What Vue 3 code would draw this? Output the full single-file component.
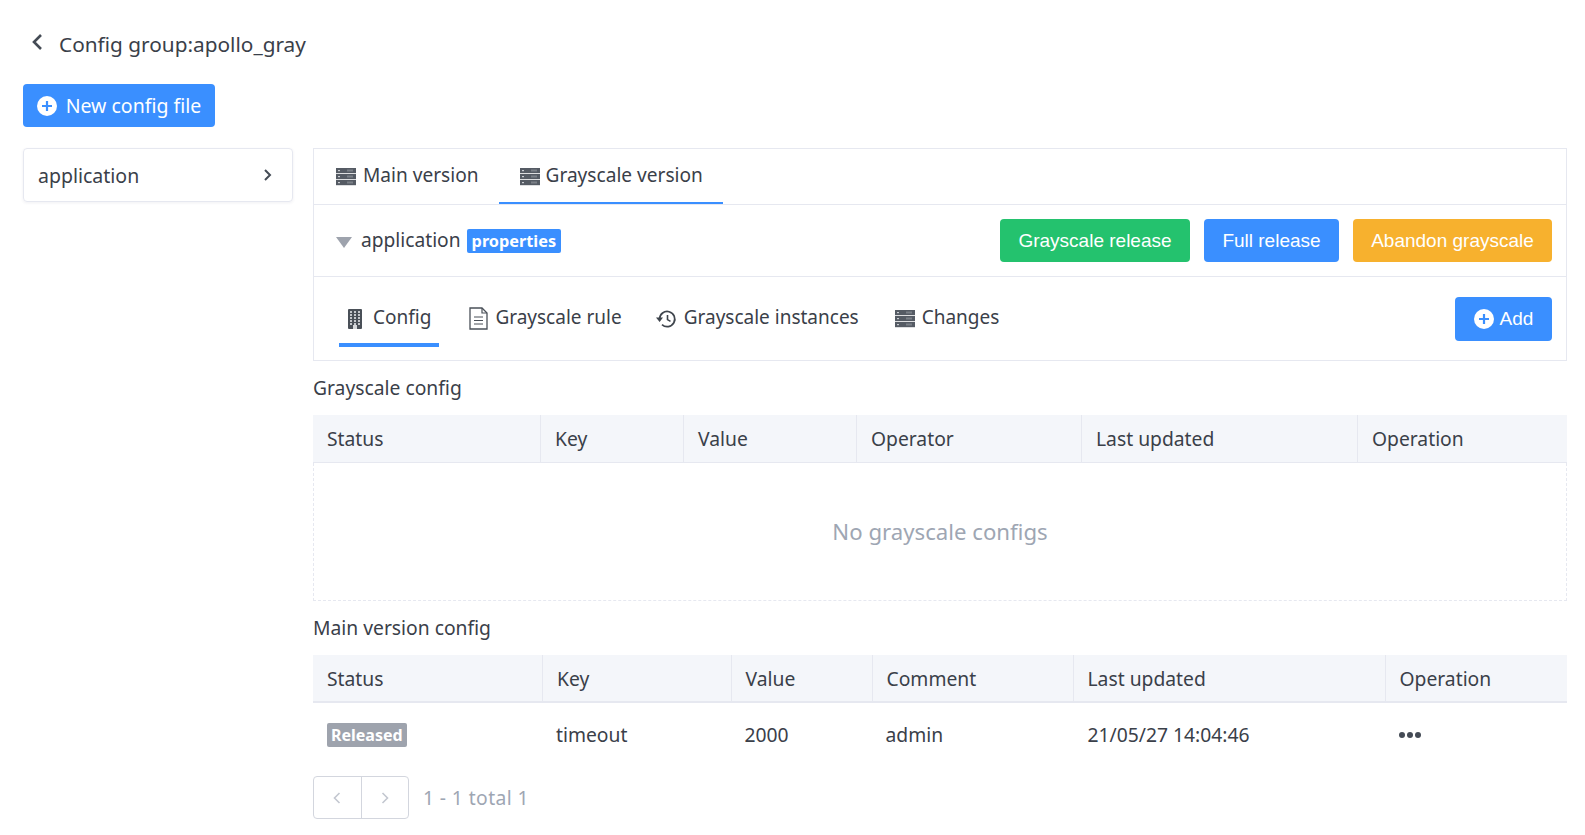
<template>
  <div class="page">
    <div class="title-row">
      <svg class="back" viewBox="0 0 12 18" width="12" height="18"><path d="M10 2 3 9l7 7" fill="none" stroke="#444b55" stroke-width="2.6"/></svg>
      <span>Config group:apollo_gray</span>
    </div>

    <button class="btn btn-new">
      <svg viewBox="0 0 20 20" width="20" height="20"><circle cx="10" cy="10" r="10" fill="#fff"/><path d="M10 5v10M5 10h10" stroke="#3a8fff" stroke-width="2.2"/></svg>
      New config file
    </button>

    <div class="body">
      <div class="file-card">
        <span>application</span>
        <svg viewBox="0 0 10 14" width="10" height="14"><path d="M2 2l5 5-5 5" fill="none" stroke="#444b55" stroke-width="2"/></svg>
      </div>

      <div class="main">
        <div class="panel">
          <div class="tabs-top">
            <div v-for="t in topTabs" :key="t.name" :class="['top-tab', { active: t.active }]">
              <svg class="ico" viewBox="0 0 20 18" width="20" height="18">
                <g v-for="y in [0, 6, 12]" :key="y">
                  <rect x="0" :y="y" width="20" height="5.2" fill="#555b64"/>
                  <rect x="2" :y="y + 2" width="2" height="1.2" fill="#c9ccd1"/>
                  <rect x="11" :y="y + 1.5" width="6" height="2" fill="#7b8087"/>
                </g>
              </svg>
              {{ t.name }}
            </div>
          </div>

          <div class="file-row">
            <div class="file-name">
              <span class="caret"></span>
              <span class="file-label">application</span>
              <span class="tag-blue">properties</span>
            </div>
            <div class="actions">
              <button class="btn btn-sm green">Grayscale release</button>
              <button class="btn btn-sm blue">Full release</button>
              <button class="btn btn-sm orange">Abandon grayscale</button>
            </div>
          </div>

          <div class="sub-row">
            <div class="sub-tabs">
              <div class="sub-tab active">
                <svg viewBox="0 0 14 20" width="14" height="20">
                  <rect width="14" height="20" rx="1" fill="#4a5058"/>
                  <g fill="#c4c7cb">
                    <rect v-for="c in cells" :key="c.k" :x="c.x" :y="c.y" width="2" height="2"/>
                  </g>
                  <rect x="5" y="16" width="4" height="4" fill="#d5d7da"/>
                </svg>
                Config
              </div>
              <div class="sub-tab rule">
                <svg viewBox="0 0 19 23" width="19" height="23">
                  <path d="M1 1h12l5 5v16H1z" fill="#fff" stroke="#4a5058" stroke-width="1.3"/>
                  <path d="M13 1v5h5M5 10h9M5 13.5h9M5 17h9" fill="none" stroke="#4a5058" stroke-width="1.2"/>
                </svg>
                Grayscale rule
              </div>
              <div class="sub-tab instances">
                <svg viewBox="0 0 22 20" width="22" height="20">
                  <path d="M3.6 10a7.6 7.6 0 1 1 2.4 5.6" fill="none" stroke="#3f454d" stroke-width="1.7"/>
                  <path d="M0 8.5h7L3.6 13z" fill="#3f454d"/>
                  <path d="M11.5 6v4.6l3 1.8" fill="none" stroke="#3f454d" stroke-width="1.6"/>
                </svg>
                Grayscale instances
              </div>
              <div class="sub-tab">
                <svg class="ico" viewBox="0 0 20 18" width="20" height="18">
                  <g v-for="y in [0, 6, 12]" :key="y">
                    <rect x="0" :y="y" width="20" height="5.2" fill="#555b64"/>
                    <rect x="2" :y="y + 2" width="2" height="1.2" fill="#c9ccd1"/>
                    <rect x="11" :y="y + 1.5" width="6" height="2" fill="#7b8087"/>
                  </g>
                </svg>
                Changes
              </div>
            </div>
            <button class="btn btn-add">
              <svg viewBox="0 0 20 20" width="20" height="20"><circle cx="10" cy="10" r="10" fill="#fff"/><path d="M10 5v10M5 10h10" stroke="#3a8fff" stroke-width="2.2"/></svg>
              Add
            </button>
          </div>
        </div>

        <div class="section-title first">Grayscale config</div>
        <div class="thead gray-cols">
          <div v-for="h in grayHead" :key="h" class="th">{{ h }}</div>
        </div>
        <div class="empty">No grayscale configs</div>

        <div class="section-title second">Main version config</div>
        <div class="thead main-cols thick">
          <div v-for="h in mainHead" :key="h" class="th">{{ h }}</div>
        </div>
        <div class="trow main-cols">
          <div class="td"><span class="tag-gray">Released</span></div>
          <div class="td">timeout</div>
          <div class="td">2000</div>
          <div class="td">admin</div>
          <div class="td">21/05/27 14:04:46</div>
          <div class="td dots-cell"><span class="dots"><i></i><i></i><i></i></span></div>
        </div>

        <div class="pager">
          <div class="pager-btns">
            <span><svg viewBox="0 0 10 14" width="10" height="14"><path d="M7.5 2 2.5 7l5 5" fill="none" stroke="#c3c7d0" stroke-width="1.6"/></svg></span>
            <span><svg viewBox="0 0 10 14" width="10" height="14"><path d="M2.5 2l5 5-5 5" fill="none" stroke="#c3c7d0" stroke-width="1.6"/></svg></span>
          </div>
          <span class="pager-text">1 - 1 total 1</span>
        </div>
      </div>
    </div>
  </div>
</template>

<script setup>
const topTabs = [
  { name: 'Main version', active: false },
  { name: 'Grayscale version', active: true },
]
const grayHead = ['Status', 'Key', 'Value', 'Operator', 'Last updated', 'Operation']
const mainHead = ['Status', 'Key', 'Value', 'Comment', 'Last updated', 'Operation']

// window grid on the building icon
const cells = []
for (const y of [2, 5, 8, 11, 14]) {
  for (const x of [2, 6, 10]) cells.push({ k: x + '-' + y, x, y })
}
</script>

<style>
html, body { background: #fff; }
</style>

<style scoped>
.page {
  width: 1585px;
  height: 835px;
  box-sizing: border-box;
  padding: 28px 18px 0 23px;
  overflow: hidden;
  font-family: "Noto Sans", "Noto Sans CJK SC", sans-serif;
  font-size: 19.3px;
  color: #3a4049;
}
.title-row {
  display: flex;
  align-items: center;
  gap: 16px;
  height: 32px;
  padding-left: 8px;
  font-size: 20.8px;
}
.title-row .back { margin-top: -4px; }
.btn {
  border: 0;
  border-radius: 4px;
  color: #fff;
  font-family: "Liberation Sans", Arial, sans-serif;
  font-size: 19px;
  display: inline-flex;
  align-items: center;
  justify-content: center;
  padding: 0;
}
.btn-new {
  margin-top: 24px;
  width: 192px;
  height: 43px;
  gap: 9px;
  background: #3a8fff;
  font-family: "Noto Sans", sans-serif;
  font-size: 19.5px;
}
.body {
  display: flex;
  gap: 20px;
  margin-top: 21px;
}
.file-card {
  width: 270px;
  height: 54px;
  box-sizing: border-box;
  border: 1px solid #e6e8f0;
  border-radius: 4px;
  box-shadow: 0 1px 3px rgba(60, 70, 100, .08);
  display: flex;
  align-items: center;
  justify-content: space-between;
  padding: 0 19px 0 14px;
  font-size: 19.5px;
  flex: none;
}
.main { flex: 1; min-width: 0; }
.panel { border: 1px solid #e6e8f0; }
.tabs-top {
  display: flex;
  height: 55px;
  padding-left: 13px;
  border-bottom: 1px solid #e6e8f0;
}
.top-tab {
  display: flex;
  align-items: center;
  gap: 7px;
  padding: 0 19px 4px 9px;
  font-size: 19.1px;
  margin-right: 1px;
  box-sizing: border-box;
}
.top-tab .ico { margin-top: 5px; }
.top-tab + .top-tab { gap: 6px; padding-left: 21px; padding-right: 20px; }
.top-tab.active { box-shadow: inset 0 -2px 0 #3a8fff; }
.file-row {
  height: 71px;
  display: flex;
  align-items: center;
  justify-content: space-between;
  padding: 0 14px 0 22px;
  border-bottom: 1px solid #e6e8f0;
}
.file-name { display: flex; align-items: center; gap: 6px; font-size: 19.2px; }
.file-label { margin-top: -3px; margin-left: 2px; }
.caret {
  width: 0;
  height: 0;
  border-left: 8px solid transparent;
  border-right: 8px solid transparent;
  border-top: 11px solid #9ea3ad;
  margin: 4px 1px 0 0;
}
.tag-blue {
  background: #3a8fff;
  color: #fff;
  font-weight: 700;
  font-size: 16.3px;
  border-radius: 2px;
  padding: 0 5px;
  height: 24px;
  line-height: 24px;
}
.actions { display: flex; gap: 14px; }
.btn-sm { height: 43px; }
.green { width: 190px; background: #24c26e; }
.blue { width: 135px; background: #3a8fff; }
.orange { width: 199px; background: #f7b12e; }
.sub-row {
  height: 83px;
  display: flex;
  align-items: center;
  justify-content: space-between;
  padding: 0 14px 0 25px;
}
.sub-tabs { display: flex; height: 100%; gap: 20px; }
.sub-tab {
  display: flex;
  align-items: center;
  gap: 7px;
  padding: 10px 7px 0 9px;
  font-size: 19px;
  height: 70px;
  box-sizing: border-box;
}
.sub-tab svg { margin-top: 3px; }
.sub-tab.active { border-bottom: 4px solid #3a8fff; padding: 14px 8px 0 9px; gap: 11px; }
.sub-tab.rule { padding-left: 10px; padding-right: 5px; }
.sub-tab.instances { gap: 6px; }
.btn-add {
  width: 97px;
  height: 44px;
  gap: 6px;
  background: #3a8fff;
}
.section-title { height: 28px; line-height: 28px; }
.section-title.first { margin-top: 13px; }
.section-title.second { margin-top: 13px; }
.thead, .trow { display: grid; }
.gray-cols { grid-template-columns: 228px 143px 173px 225px 276px 1fr; }
.main-cols { grid-template-columns: 230px 188.5px 141px 201px 312px 1fr; }
.thead {
  background: #f4f6fa;
  height: 47px;
  margin-top: 13px;
  border-bottom: 1px solid #e6e8f0;
}
.thead.thick { border-bottom-width: 2px; height: 46px; }
.th {
  display: flex;
  align-items: center;
  padding-left: 14px;
  border-right: 1px solid #e6e8f0;
}
.th:last-child { border-right: 0; }
.empty {
  height: 138px;
  box-sizing: border-box;
  border: 1px dashed #e6e8f0;
  border-top: 0;
  display: flex;
  align-items: center;
  justify-content: center;
  font-size: 22.2px;
  color: #9ea6b3;
}
.trow { height: 63px; align-items: center; }
.td { padding-left: 13px; }
.td:first-child, .td:nth-child(5) { padding-left: 14px; }
.tag-gray {
  display: block;
  background: #9ea3ad;
  color: #fff;
  font-weight: 700;
  font-size: 16px;
  border-radius: 2px;
  padding: 0 4px;
  height: 24px;
  line-height: 24px;
  width: 80px;
  box-sizing: border-box;
  white-space: nowrap;
}
.dots-cell { display: flex; align-items: center; }
.dots { display: flex; gap: 2px; }
.dots i {
  width: 6px;
  height: 6px;
  border-radius: 50%;
  background: #444b55;
}
.pager {
  display: flex;
  align-items: center;
  gap: 14px;
  margin-top: 10px;
}
.pager-btns {
  display: flex;
  width: 96px;
  height: 43px;
  box-sizing: border-box;
  border: 1px solid #d3d6de;
  border-radius: 4px;
}
.pager-btns span {
  flex: 1;
  display: flex;
  align-items: center;
  justify-content: center;
}
.pager-btns span + span { border-left: 1px solid #d3d6de; }
.pager-text { color: #9ea6b3; letter-spacing: .4px; }
</style>
